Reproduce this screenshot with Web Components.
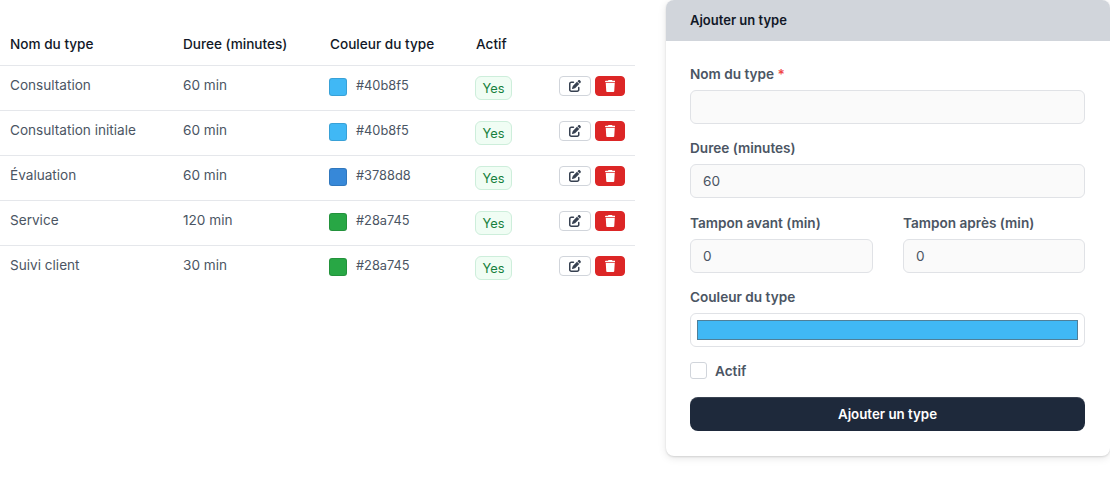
<!DOCTYPE html>
<html lang="fr">
<head>
<meta charset="utf-8">
<title>Types</title>
<style>
  html, body { margin: 0; background: #fff; }
  body { font-family: Inter, "Noto Sans", sans-serif; }
  #page { display: flex; align-items: flex-start; gap: 31px; min-height: 482px; }
</style>
</head>
<body>
<div id="page">
  <type-table>
    <type-row name="Consultation" duration="60 min" color="#40b8f5"></type-row>
    <type-row name="Consultation initiale" duration="60 min" color="#40b8f5"></type-row>
    <type-row name="Évaluation" duration="60 min" color="#3788d8"></type-row>
    <type-row name="Service" duration="120 min" color="#28a745"></type-row>
    <type-row name="Suivi client" duration="30 min" color="#28a745" last></type-row>
  </type-table>
  <type-form></type-form>
</div>
<script>
const COLS = '173px 147px 146px 1fr'

const EDIT_ICON = '<svg viewBox="0 0 512 512" width="12" height="12"><path fill="currentColor" d="M471.6 21.7c-21.9-21.9-57.3-21.9-79.2 0L362.3 51.7l97.9 97.9 30.1-30.1c21.9-21.9 21.9-57.3 0-79.2L471.6 21.7zm-299.2 220c-6.1 6.1-10.8 13.6-13.5 21.9l-29.6 88.8c-2.9 8.6-.6 18.1 5.8 24.6s15.9 8.7 24.6 5.8l88.8-29.6c8.2-2.7 15.7-7.4 21.9-13.5L437.7 172.3 339.7 74.3 172.4 241.7zM96 64C43 64 0 107 0 160V416c0 53 43 96 96 96H352c53 0 96-43 96-96V320c0-17.7-14.3-32-32-32s-32 14.3-32 32v96c0 17.7-14.3 32-32 32H96c-17.7 0-32-14.3-32-32V160c0-17.7 14.3-32 32-32h96c17.7 0 32-14.3 32-32s-14.3-32-32-32H96z"/></svg>'
const TRASH_ICON = '<svg viewBox="0 0 448 512" width="10.5" height="12"><path fill="currentColor" d="M135.2 17.7L128 32H32C14.3 32 0 46.3 0 64S14.3 96 32 96H416c17.7 0 32-14.3 32-32s-14.3-32-32-32H320l-7.2-14.3C307.4 6.8 296.3 0 284.2 0H163.8c-12.1 0-23.2 6.8-28.6 17.7zM416 128H32L53.2 467c1.6 25.3 22.6 45 47.9 45H346.9c25.3 0 46.3-19.7 47.9-45L416 128z"/></svg>'

class TypeTable extends HTMLElement {
  constructor() {
    super()
    this.attachShadow({ mode: 'open' })
    this.shadowRoot.innerHTML = `
      <style>
        :host { display: block; width: 635px; padding-top: 22px; font-size: 13.6px; flex-shrink: 0; }
        .head {
          display: grid;
          grid-template-columns: ${COLS};
          height: 43px;
          align-items: center;
          border-bottom: 1px solid #e5e7eb;
          color: #111827;
          font-weight: 500;
        }
        .head span { padding-left: 10px; }
      </style>
      <div class="head">
        <span>Nom du type</span>
        <span>Duree (minutes)</span>
        <span>Couleur du type</span>
        <span>Actif</span>
      </div>
      <slot></slot>`
  }
}

class TypeRow extends HTMLElement {
  constructor() {
    super()
    this.attachShadow({ mode: 'open' })
  }

  connectedCallback() {
    const name = this.getAttribute('name')
    const duration = this.getAttribute('duration')
    const color = this.getAttribute('color')
    this.shadowRoot.innerHTML = `
      <style>
        :host {
          display: grid;
          grid-template-columns: ${COLS};
          height: 44px;
          align-items: start;
          border-bottom: 1px solid #e5e7eb;
          color: #4b5563;
        }
        :host([last]) { border-bottom-color: transparent; }
        .cell { padding: 11px 0 0 10px; line-height: 17px; }
        .color { display: flex; align-items: center; gap: 9px; font-size: 12.8px; padding-left: 9px; }
        .color .hex { margin-bottom: 2px; }
        .swatch {
          width: 16px; height: 16px;
          border: 1px solid rgba(0,0,0,.12);
          border-radius: 3px;
          background: ${color};
        }
        .last-cell { display: flex; justify-content: space-between; align-items: flex-start; padding: 10px 10px 0 9px; }
        .badge {
          display: block;
          box-sizing: border-box;
          width: 37px; height: 24px;
          line-height: 24px;
          text-align: center;
          font-size: 12.8px;
          color: #15803d;
          background: #f0fdf4;
          border: 1px solid #cdeedb;
          border-radius: 6px;
        }
        .actions { display: flex; gap: 4px; }
        button {
          display: flex; align-items: center; justify-content: center;
          box-sizing: border-box;
          height: 20px; padding: 0;
          border-radius: 4px;
        }
        .edit { width: 32px; background: #fff; border: 1px solid #d1d5db; color: #374151; }
        .del { width: 30px; background: #dc2626; border: 1px solid #dc2626; color: #fff; }
      </style>
      <div class="cell">${name}</div>
      <div class="cell">${duration}</div>
      <div class="cell color"><span class="swatch"></span><span class="hex">${color}</span></div>
      <div class="last-cell">
        <span class="badge">Yes</span>
        <div class="actions">
          <button class="edit">${EDIT_ICON}</button>
          <button class="del">${TRASH_ICON}</button>
        </div>
      </div>`
  }
}

class FormField extends HTMLElement {
  constructor() {
    super()
    this.attachShadow({ mode: 'open' })
  }

  connectedCallback() {
    const required = this.hasAttribute('required')
    const value = this.getAttribute('value') || ''
    const type = this.getAttribute('type') || 'text'
    this.shadowRoot.innerHTML = `
      <style>
        :host { display: block; font-size: 13.6px; }
        label { display: block; height: 18px; line-height: 19px; margin-bottom: 7px; font-weight: 600; color: #4b5563; }
        label b { color: #ef4444; font-weight: 600; }
        input {
          display: block;
          box-sizing: border-box;
          width: 100%; height: 34px;
          padding: 0 12px;
          font: 400 13.6px Inter, "Noto Sans", sans-serif;
          color: #4b5563;
          background: #fafafa;
          border: 1px solid #e0e2e6;
          border-radius: 6px;
          outline: none;
        }
      </style>
      <label>${this.getAttribute('label')}${required ? ' <b>*</b>' : ''}</label>
      <input type="${type}" value="${value}">`
  }
}

class ColorField extends HTMLElement {
  constructor() {
    super()
    this.attachShadow({ mode: 'open' })
  }

  connectedCallback() {
    this.shadowRoot.innerHTML = `
      <style>
        :host { display: block; font-size: 13.6px; }
        label { display: block; height: 17px; line-height: 17px; margin-bottom: 7px; font-weight: 600; color: #4b5563; }
        .box {
          box-sizing: border-box;
          height: 34px;
          padding: 6px;
          background: #fff;
          border: 1px solid #e0e2e6;
          border-radius: 6px;
        }
        .fill { height: 100%; box-sizing: border-box; background: ${this.getAttribute('value')}; border: 1px solid #4f7f99; }
      </style>
      <label>${this.getAttribute('label')}</label>
      <div class="box"><div class="fill"></div></div>`
  }
}

class TypeForm extends HTMLElement {
  constructor() {
    super()
    this.attachShadow({ mode: 'open' })
    this.shadowRoot.innerHTML = `
      <style>
        :host {
          display: block;
          box-sizing: border-box;
          width: 444px; height: 456px;
          background: #fff;
          border-radius: 8px;
          box-shadow: 0 1px 2px rgba(0,0,0,.12), 0 2px 8px rgba(0,0,0,.1);
          flex-shrink: 0;
        }
        .title {
          height: 41px;
          line-height: 41px;
          padding-left: 24px;
          background: #d1d5db;
          border-radius: 8px 8px 0 0;
          color: #111827;
          font-size: 13px;
          font-weight: 600;
        }
        .body { display: flex; flex-direction: column; padding: 24px 25px 0 24px; }
        .f1 { margin-bottom: 15px; }
        .f2 { margin-bottom: 16px; }
        .pair { display: grid; grid-template-columns: 183px 182px; gap: 30px; margin-bottom: 16px; }
        .check { display: flex; align-items: center; gap: 8px; margin-top: 15px; height: 17px; font-size: 13.6px; font-weight: 600; color: #4b5563; }
        .box { width: 17px; height: 17px; box-sizing: border-box; border: 1px solid #d1d5db; border-radius: 3px; background: #fff; }
        button {
          margin-top: 18px;
          height: 34px;
          border: 0;
          border-radius: 8px;
          background: #1e293b;
          box-shadow: inset 0 1px 0 rgba(255,255,255,.12);
          color: #fff;
          font: 600 13.3px Inter, "Noto Sans", sans-serif;
        }
      </style>
      <div class="title">Ajouter un type</div>
      <div class="body">
        <form-field class="f1" label="Nom du type" required></form-field>
        <form-field class="f2" label="Duree (minutes)" value="60"></form-field>
        <div class="pair">
          <form-field label="Tampon avant (min)" value="0"></form-field>
          <form-field label="Tampon après (min)" value="0"></form-field>
        </div>
        <color-field label="Couleur du type" value="#40b8f5"></color-field>
        <div class="check"><span class="box"></span><span>Actif</span></div>
        <button>Ajouter un type</button>
      </div>`
  }
}

customElements.define('type-table', TypeTable)
customElements.define('type-row', TypeRow)
customElements.define('form-field', FormField)
customElements.define('color-field', ColorField)
customElements.define('type-form', TypeForm)
</script>
</body>
</html>
